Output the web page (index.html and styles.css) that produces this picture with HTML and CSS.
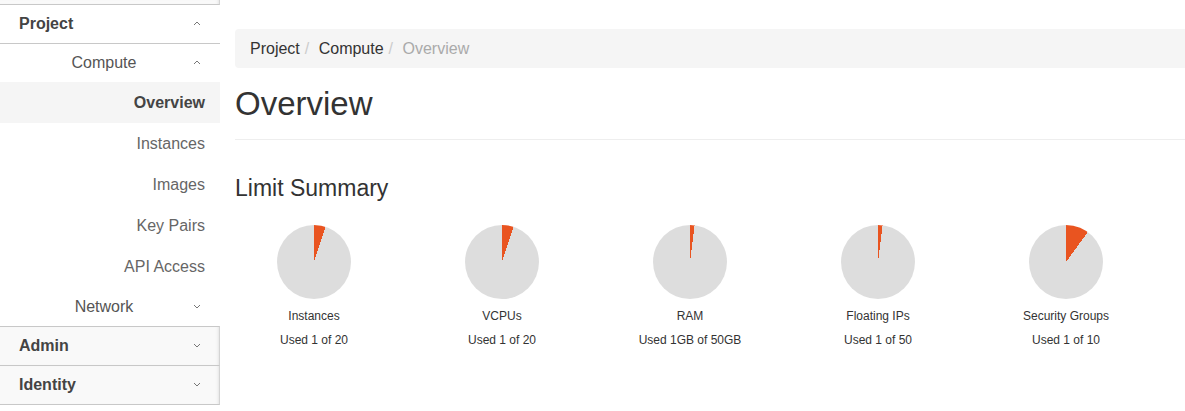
FILE: index.html
```html
<!DOCTYPE html>
<html>
<head>
<meta charset="utf-8">
<link rel="stylesheet" href="styles.css">
</head>
<body>
<div class="layout">
  <nav class="sidebar">
    <div class="sb-top"></div>
    <div class="sb-header sb-open">
      <span class="sb-title">Project</span>
      <svg class="chev" width="8" height="5" viewBox="0 0 8 5"><polyline points="1,4 4,1 7,4" fill="none" stroke="#777" stroke-width="1"/></svg>
    </div>
    <div class="sb-sub">
      <span>Compute</span>
      <svg class="chev" width="8" height="5" viewBox="0 0 8 5"><polyline points="1,4 4,1 7,4" fill="none" stroke="#777" stroke-width="1"/></svg>
    </div>
    <a class="sb-item active">Overview</a>
    <a class="sb-item">Instances</a>
    <a class="sb-item">Images</a>
    <a class="sb-item">Key Pairs</a>
    <a class="sb-item">API Access</a>
    <div class="sb-sub sb-net">
      <span>Network</span>
      <svg class="chev" width="8" height="5" viewBox="0 0 8 5"><polyline points="1,1 4,4 7,1" fill="none" stroke="#777" stroke-width="1"/></svg>
    </div>
    <div class="sb-header sb-closed sb-first">
      <span class="sb-title">Admin</span>
      <svg class="chev" width="8" height="5" viewBox="0 0 8 5"><polyline points="1,1 4,4 7,1" fill="none" stroke="#777" stroke-width="1"/></svg>
    </div>
    <div class="sb-header sb-closed">
      <span class="sb-title">Identity</span>
      <svg class="chev" width="8" height="5" viewBox="0 0 8 5"><polyline points="1,1 4,4 7,1" fill="none" stroke="#777" stroke-width="1"/></svg>
    </div>
  </nav>
  <main class="main">
    <ol class="breadcrumb">
      <li>Project</li>
      <li>Compute</li>
      <li class="bc-active">Overview</li>
    </ol>
    <div class="page-header">
      <h1>Overview</h1>
    </div>
    <h3 class="section-title">Limit Summary</h3>
    <div class="pies">
      <div class="pie-cell">
        <div class="pie" style="background: conic-gradient(#e95420 0 5%, #dddddd 5% 100%)"></div>
        <div class="pie-label">Instances</div>
        <div class="pie-used">Used 1 of 20</div>
      </div>
      <div class="pie-cell">
        <div class="pie" style="background: conic-gradient(#e95420 0 5%, #dddddd 5% 100%)"></div>
        <div class="pie-label">VCPUs</div>
        <div class="pie-used">Used 1 of 20</div>
      </div>
      <div class="pie-cell">
        <div class="pie" style="background: conic-gradient(#e95420 0 2%, #dddddd 2% 100%)"></div>
        <div class="pie-label">RAM</div>
        <div class="pie-used">Used 1GB of 50GB</div>
      </div>
      <div class="pie-cell">
        <div class="pie" style="background: conic-gradient(#e95420 0 2%, #dddddd 2% 100%)"></div>
        <div class="pie-label">Floating IPs</div>
        <div class="pie-used">Used 1 of 50</div>
      </div>
      <div class="pie-cell">
        <div class="pie" style="background: conic-gradient(#e95420 0 10%, #dddddd 10% 100%)"></div>
        <div class="pie-label">Security Groups</div>
        <div class="pie-used">Used 1 of 10</div>
      </div>
    </div>
  </main>
</div>
</body>
</html>
```
FILE: styles.css
```css
* { box-sizing: border-box; }
html, body {
  margin: 0;
  padding: 0;
  background: #fff;
  font-family: "Liberation Sans", Arial, sans-serif;
  color: #333;
  overflow: hidden;
}
.layout {
  display: flex;
  width: 1185px;
  height: 411px;
}
.sidebar {
  width: 220px;
  flex: none;
  display: flex;
  flex-direction: column;
  font-size: 16px;
}
.sb-top {
  height: 5px;
  background: #f9f9f9;
  border-bottom: 1px solid #c8c8c8;
  border-right: 1px solid #d4d4d4;
  box-shadow: inset -3px 0 3px -2px #e4e4e4;
}
.sb-header {
  position: relative;
  height: 39px;
  display: flex;
  align-items: center;
  padding-left: 19px;
  border-bottom: 1px solid #c8c8c8;
}
.sb-title {
  font-weight: bold;
  color: #444;
}
.sb-open {
  background: #fff;
}
.sb-closed {
  background: #f9f9f9;
  border-right: 1px solid #d4d4d4;
  box-shadow: inset -3px 0 3px -2px #e4e4e4;
}
.sb-first {
  border-top: 1px solid #c8c8c8;
  height: 40px;
}
.chev {
  position: absolute;
  left: 193px;
  top: 50%;
  margin-top: -3px;
}
.sb-sub {
  position: relative;
  height: 38px;
  display: flex;
  align-items: center;
  justify-content: center;
  padding-right: 12px;
  color: #555;
}
.sb-net {
  height: 39px;
}
.sb-item {
  display: block;
  height: 41px;
  line-height: 41px;
  text-align: right;
  padding-right: 15px;
  color: #666;
}
.sb-item.active {
  background: #f5f5f5;
  font-weight: bold;
  color: #444;
}
.main {
  flex: 1;
  padding-left: 15px;
  min-width: 0;
}
.breadcrumb {
  list-style: none;
  margin: 29px 0 0 0;
  padding: 8px 15px;
  background: #f5f5f5;
  border-radius: 4px 0 0 4px;
  display: flex;
  font-size: 16px;
  line-height: 23px;
  color: #333;
}
.breadcrumb li + li::before {
  content: "/\00a0";
  padding: 0 5px;
  color: #ccc;
}
.bc-active {
  color: #aaa;
}
.page-header {
  margin-top: 17px;
  padding-bottom: 17px;
  border-bottom: 1px solid #eee;
}
.page-header h1 {
  margin: 0;
  font-size: 33px;
  font-weight: normal;
  line-height: 37px;
  color: #333;
}
.section-title {
  margin: 36px 0 0 0;
  font-size: 23px;
  font-weight: normal;
  line-height: 25px;
  color: #333;
}
.pies {
  margin-left: -15px;
  margin-top: 24px;
  display: grid;
  grid-template-columns: repeat(5, 188px);
}
.pie-cell {
  display: flex;
  flex-direction: column;
  align-items: center;
  font-size: 12px;
  line-height: 17px;
  color: #333;
}
.pie {
  width: 74px;
  height: 74px;
  border-radius: 50%;
}
.pie-label {
  margin-top: 9px;
}
.pie-used {
  margin-top: 7px;
}
```
